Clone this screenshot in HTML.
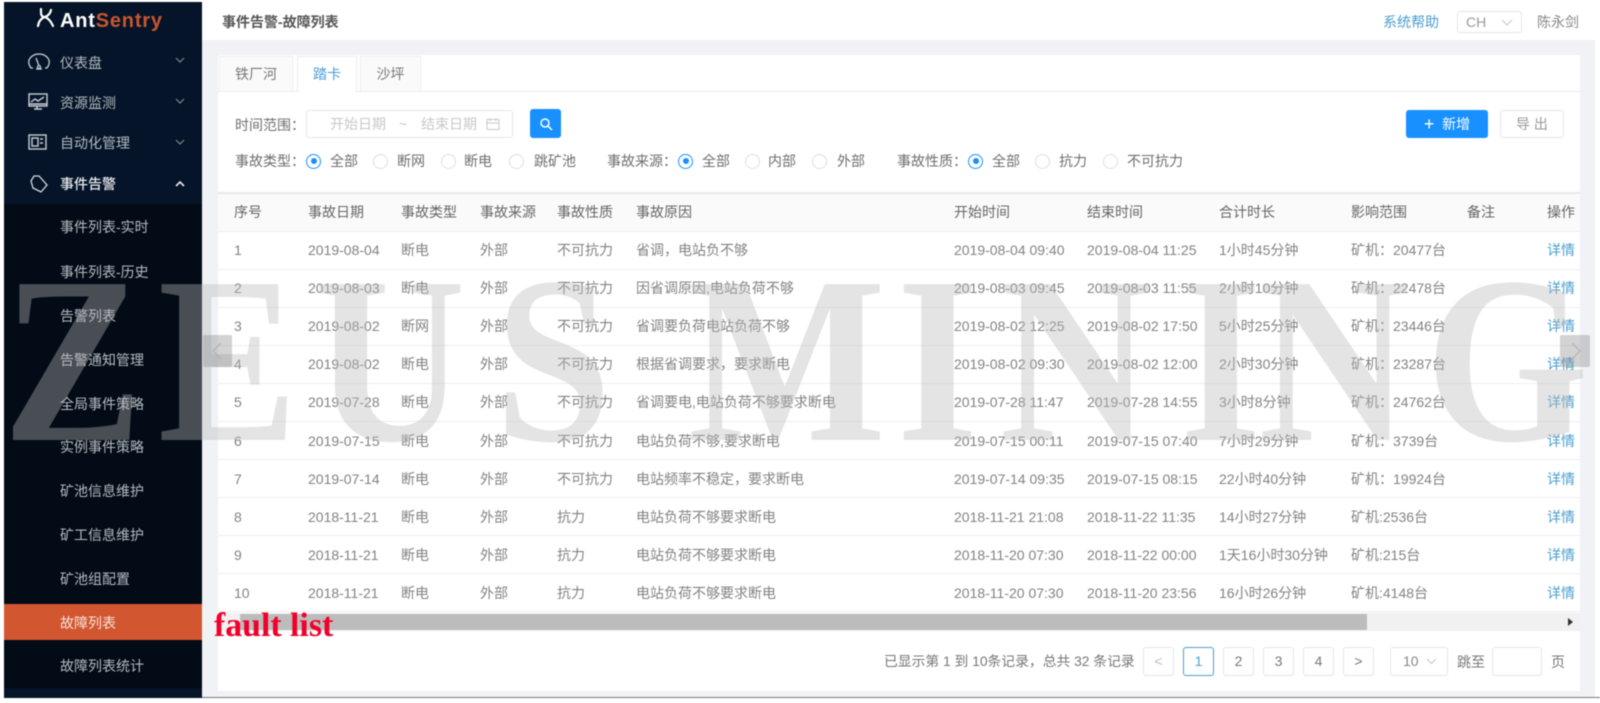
<!DOCTYPE html>
<html lang="zh"><head><meta charset="utf-8"><title>AntSentry</title>
<style>
*{box-sizing:border-box}
html,body{margin:0;padding:0;width:1600px;height:703px;overflow:hidden;background:#fff}
body{position:relative;font:14px "Liberation Sans","Noto Sans CJK SC",sans-serif;color:#808080}
.a{position:absolute;white-space:nowrap}
#blur{position:absolute;left:0;top:0;width:1600px;height:703px;filter:blur(.5px)}
.side{left:4px;top:2px;width:198px;height:696px;background:#051428}
.sub{left:4px;top:204px;width:198px;height:484px;background:#020b16}
.m{left:60px;color:#b4bac0;line-height:20px;transform:translateY(-10px)}
.box{background:#fff;border:1px solid #e4e6ea;border-radius:3px}
.lab{color:#6f6f6f;line-height:20px;top:151px}
.r{top:153.5px;width:15px;height:15px;border:1px solid #dcdfe3;border-radius:50%;background:#fff}
.r.on{border-color:#1890ff}
.r.on:after{content:"";position:absolute;left:3.5px;top:3.5px;width:6px;height:6px;border-radius:50%;background:#1890ff}
table{position:absolute;left:218px;top:192px;width:1362px;border-collapse:collapse;table-layout:fixed;border-top:2px solid #e8e8e8}
td,th{padding:0;font-weight:400;text-align:left;white-space:nowrap;border-bottom:1px solid #eeeeee;overflow:hidden}
th{height:38px;background:#fafafa;color:#666}
td{height:38.1px;color:#838383}
td:first-child,th:first-child{padding-left:16px}
td:last-child{color:#4a9fd0}
.pg{top:647px;height:29px;width:31px;line-height:27px;text-align:center;color:#777}
</style></head><body><div id="blur">
<div class="a" style="left:202px;top:0;width:1393px;height:698px;background:#f0f2f6"></div>
<div class="a" style="left:202px;top:0;width:1393px;height:40px;background:#fff"></div>
<div class="a" style="left:202px;top:697px;width:1398px;height:1px;background:#777"></div>
<div class="a side"></div><div class="a sub"></div>
<div class="a" style="left:4px;top:604px;width:198px;height:36px;background:#d2562f"></div>

<svg class="a" style="left:36px;top:7px" width="20" height="22" viewBox="0 0 20 22" fill="none" stroke="#fff" stroke-width="2.2" stroke-linecap="round"><path d="M5 2v4q0 4 4 4M15 3q-1 5-6 7M2 19q1-7 7-9 5 2 8 9"/></svg>
<div class="a" style="left:60px;top:8px;font-size:20px;font-weight:700;letter-spacing:.8px;color:#fff;line-height:26px">Ant<span style="color:#c8562f">Sentry</span></div>

<svg class="a" style="left:27px;top:52px" width="24" height="20" viewBox="0 0 24 20" fill="none" stroke="#c9ced3" stroke-width="1.3"><path d="M6 16H4Q1 12 2 8 5 2 12 2t10 6q1 4-2 8h-2"/><path d="m9 6 3 8"/><path d="M9 17h6"/><circle cx="12" cy="15" r="1.5"/></svg>
<svg class="a" style="left:28px;top:93px" width="20" height="18" viewBox="0 0 20 18" fill="none" stroke="#c9ced3" stroke-width="1.4"><rect x="1" y="1" width="18" height="12"/><path d="m3 9 4-3 3 2 6-4M6 16h8M9 13v3M1 11h18"/></svg>
<svg class="a" style="left:28px;top:134px" width="19" height="16" viewBox="0 0 19 16" fill="none" stroke="#c9ced3" stroke-width="1.4"><rect x="1" y="1" width="17" height="14"/><rect x="4" y="4" width="6" height="8"/><path d="M12 5h3M12 9h3"/></svg>
<svg class="a" style="left:29px;top:174px" width="20" height="20" viewBox="0 0 20 20" fill="none" stroke="#d5d9dd" stroke-width="1.3"><path d="M2 7 5 2h5l8 9-6 7-8-4Z"/></svg>

<div class="a m" style="top:63px">仪表盘</div>
<div class="a m" style="top:103px">资源监测</div>
<div class="a m" style="top:143px">自动化管理</div>
<div class="a m" style="top:184px;color:#e8eaec;font-weight:500">事件告警</div>
<svg class="a" style="left:175px;top:57px" width="10" height="6" viewBox="0 0 10 6" fill="none" stroke="#7f8790" stroke-width="1.2"><path d="m1 1 4 4 4-4"/></svg>
<svg class="a" style="left:175px;top:98px" width="10" height="6" viewBox="0 0 10 6" fill="none" stroke="#7f8790" stroke-width="1.2"><path d="m1 1 4 4 4-4"/></svg>
<svg class="a" style="left:175px;top:139px" width="10" height="6" viewBox="0 0 10 6" fill="none" stroke="#7f8790" stroke-width="1.2"><path d="m1 1 4 4 4-4"/></svg>
<svg class="a" style="left:175px;top:181px" width="10" height="6" viewBox="0 0 10 6" fill="none" stroke="#e8eaec" stroke-width="1.6"><path d="m1 5 4-4 4 4"/></svg>

<div class="a m" style="top:227px">事件列表-实时</div>
<div class="a m" style="top:272px">事件列表-历史</div>
<div class="a m" style="top:316px">告警列表</div>
<div class="a m" style="top:360px">告警通知管理</div>
<div class="a m" style="top:404px">全局事件策略</div>
<div class="a m" style="top:447px">实例事件策略</div>
<div class="a m" style="top:491px">矿池信息维护</div>
<div class="a m" style="top:535px">矿工信息维护</div>
<div class="a m" style="top:579px">矿池组配置</div>
<div class="a m" style="top:623px;color:#f6e4dc">故障列表</div>
<div class="a m" style="top:666px">故障列表统计</div>

<div class="a" style="left:222px;top:12px;font-weight:700;color:#555;line-height:20px">事件告警-故障列表</div>
<div class="a" style="left:1383px;top:12px;color:#4a9fd0;line-height:20px">系统帮助</div>
<div class="a box" style="left:1457px;top:11px;width:65px;height:22px;line-height:20px;padding-left:8px;color:#999">CH</div>
<svg class="a" style="left:1501px;top:19px" width="12" height="7" viewBox="0 0 12 7" fill="none" stroke="#c5c8cc"><path d="m1 1 5 5 5-5"/></svg>
<div class="a" style="left:1537px;top:12px;color:#888;line-height:20px">陈永剑</div>

<div class="a" style="left:218px;top:55px;width:1362px;height:636px;background:#fff"></div>
<div class="a" style="left:218px;top:91px;width:1362px;height:1px;background:#ececec"></div>
<div class="a" style="left:219px;top:56px;width:74px;height:36px;background:#fafafa;border:1px solid #ededed;text-align:center;line-height:34px;color:#777">铁厂河</div>
<div class="a" style="left:297px;top:56px;width:60px;height:36px;background:#fff;border:1px solid #ededed;border-bottom:0;text-align:center;line-height:34px;color:#4a9fd8">踏卡</div>
<div class="a" style="left:360px;top:56px;width:61px;height:36px;background:#fafafa;border:1px solid #ededed;text-align:center;line-height:34px;color:#777">沙坪</div>

<div class="a" style="left:235px;top:115px;color:#6f6f6f;line-height:20px">时间范围：</div>
<div class="a box" style="left:306px;top:110px;width:207px;height:28px"></div>
<div class="a" style="left:330px;top:114px;line-height:20px;color:#c8c8c8">开始日期</div>
<div class="a" style="left:399px;top:114px;line-height:20px;color:#c8c8c8">~</div>
<div class="a" style="left:421px;top:114px;line-height:20px;color:#c8c8c8">结束日期</div>
<svg class="a" style="left:486px;top:117px" width="14" height="14" viewBox="0 0 14 14" fill="none" stroke="#c8c8c8"><rect x="1" y="2.500" width="12" height="10"/><path d="M1 6h12M4 1v3M10 1v3"/></svg>
<div class="a" style="left:530px;top:109px;width:31px;height:29px;background:#1890ff;border-radius:3px"></div>
<svg class="a" style="left:539px;top:117px" width="14" height="14" viewBox="0 0 14 14" fill="none" stroke="#fff" stroke-width="1.5"><circle cx="6" cy="6" r="4"/><path d="m9 9 4 4"/></svg>
<div class="a" style="left:1406px;top:110px;width:82px;height:28px;background:#1890ff;border-radius:3px;color:#fff;line-height:28px;text-align:center"><span style="font-size:18px;vertical-align:-1px">+</span>&nbsp; 新增</div>
<div class="a box" style="left:1500px;top:110px;width:64px;height:28px;text-align:center;line-height:26px;color:#999">导 出</div>

<div class="a lab" style="left:235px">事故类型：</div>
<div class="a r on" style="left:306px"></div><div class="a lab" style="left:330px">全部</div>
<div class="a r" style="left:373px"></div><div class="a lab" style="left:397px">断网</div>
<div class="a r" style="left:441px"></div><div class="a lab" style="left:464px">断电</div>
<div class="a r" style="left:509px"></div><div class="a lab" style="left:534px">跳矿池</div>
<div class="a lab" style="left:607px">事故来源：</div>
<div class="a r on" style="left:678px"></div><div class="a lab" style="left:702px">全部</div>
<div class="a r" style="left:745px"></div><div class="a lab" style="left:768px">内部</div>
<div class="a r" style="left:812px"></div><div class="a lab" style="left:837px">外部</div>
<div class="a lab" style="left:897px">事故性质：</div>
<div class="a r on" style="left:968px"></div><div class="a lab" style="left:992px">全部</div>
<div class="a r" style="left:1035px"></div><div class="a lab" style="left:1059px">抗力</div>
<div class="a r" style="left:1103px"></div><div class="a lab" style="left:1127px">不可抗力</div>

<table><colgroup><col style="width:90px"><col style="width:93px"><col style="width:79px"><col style="width:77px"><col style="width:79px"><col style="width:318px"><col style="width:133px"><col style="width:132px"><col style="width:132px"><col style="width:116px"><col style="width:80px"><col style="width:33px"></colgroup>
<tr><th>序号</th><th>事故日期</th><th>事故类型</th><th>事故来源</th><th>事故性质</th><th>事故原因</th><th>开始时间</th><th>结束时间</th><th>合计时长</th><th>影响范围</th><th>备注</th><th>操作</th></tr>
<tr><td>1</td><td>2019-08-04</td><td>断电</td><td>外部</td><td>不可抗力</td><td>省调，电站负不够</td><td>2019-08-04 09:40</td><td>2019-08-04 11:25</td><td>1小时45分钟</td><td>矿机：20477台</td><td></td><td>详情</td></tr>
<tr><td>2</td><td>2019-08-03</td><td>断电</td><td>外部</td><td>不可抗力</td><td>因省调原因,电站负荷不够</td><td>2019-08-03 09:45</td><td>2019-08-03 11:55</td><td>2小时10分钟</td><td>矿机：22478台</td><td></td><td>详情</td></tr>
<tr><td>3</td><td>2019-08-02</td><td>断网</td><td>外部</td><td>不可抗力</td><td>省调要负荷电站负荷不够</td><td>2019-08-02 12:25</td><td>2019-08-02 17:50</td><td>5小时25分钟</td><td>矿机：23446台</td><td></td><td>详情</td></tr>
<tr><td>4</td><td>2019-08-02</td><td>断电</td><td>外部</td><td>不可抗力</td><td>根据省调要求，要求断电</td><td>2019-08-02 09:30</td><td>2019-08-02 12:00</td><td>2小时30分钟</td><td>矿机：23287台</td><td></td><td>详情</td></tr>
<tr><td>5</td><td>2019-07-28</td><td>断电</td><td>外部</td><td>不可抗力</td><td>省调要电,电站负荷不够要求断电</td><td>2019-07-28 11:47</td><td>2019-07-28 14:55</td><td>3小时8分钟</td><td>矿机：24762台</td><td></td><td>详情</td></tr>
<tr><td>6</td><td>2019-07-15</td><td>断电</td><td>外部</td><td>不可抗力</td><td>电站负荷不够,要求断电</td><td>2019-07-15 00:11</td><td>2019-07-15 07:40</td><td>7小时29分钟</td><td>矿机：3739台</td><td></td><td>详情</td></tr>
<tr><td>7</td><td>2019-07-14</td><td>断电</td><td>外部</td><td>不可抗力</td><td>电站频率不稳定，要求断电</td><td>2019-07-14 09:35</td><td>2019-07-15 08:15</td><td>22小时40分钟</td><td>矿机：19924台</td><td></td><td>详情</td></tr>
<tr><td>8</td><td>2018-11-21</td><td>断电</td><td>外部</td><td>抗力</td><td>电站负荷不够要求断电</td><td>2018-11-21 21:08</td><td>2018-11-22 11:35</td><td>14小时27分钟</td><td>矿机:2536台</td><td></td><td>详情</td></tr>
<tr><td>9</td><td>2018-11-21</td><td>断电</td><td>外部</td><td>抗力</td><td>电站负荷不够要求断电</td><td>2018-11-20 07:30</td><td>2018-11-22 00:00</td><td>1天16小时30分钟</td><td>矿机:215台</td><td></td><td>详情</td></tr>
<tr><td>10</td><td>2018-11-21</td><td>断电</td><td>外部</td><td>抗力</td><td>电站负荷不够要求断电</td><td>2018-11-20 07:30</td><td>2018-11-20 23:56</td><td>16小时26分钟</td><td>矿机:4148台</td><td></td><td>详情</td></tr>
</table>

<div class="a" style="left:218px;top:613px;width:1362px;height:18px;background:#f1f1f1"></div>
<div class="a" style="left:240px;top:614px;width:1127px;height:16px;background:#bcbcbc"></div>
<div class="a" style="left:1568px;top:618px;width:0;height:0;border-left:5px solid #333;border-top:4px solid transparent;border-bottom:4px solid transparent"></div>

<div class="a" style="left:884px;top:652px;line-height:20px;font-size:13.8px;color:#777">已显示第 1 到 10条记录，总共 32 条记录</div>
<div class="a box pg" style="left:1143px;color:#bbb">&lt;</div>
<div class="a box pg" style="left:1183px;border-color:#4a9fd0;color:#4a9fd0">1</div>
<div class="a box pg" style="left:1223px">2</div>
<div class="a box pg" style="left:1263px">3</div>
<div class="a box pg" style="left:1303px">4</div>
<div class="a box pg" style="left:1343px">&gt;</div>
<div class="a box pg" style="left:1390px;width:58px;text-align:left;padding-left:12px;color:#888">10</div>
<svg class="a" style="left:1426px;top:658px" width="11" height="7" viewBox="0 0 11 7" fill="none" stroke="#c5c8cc"><path d="m1 1 4.500 4.500 4.500-4.500"/></svg>
<div class="a" style="left:1457px;top:652px;line-height:20px;color:#777">跳至</div>
<div class="a box pg" style="left:1492px;width:50px"></div>
<div class="a" style="left:1551px;top:652px;line-height:20px;color:#777">页</div>

<svg class="a" style="left:0;top:0" width="1600" height="703"><text transform="scale(.88 1)" y="440" x="3.4 179.500 357 562.500 782 1019 1136 1341 1430 1620" font-family="Liberation Serif" font-weight="700" font-size="238" fill="#b9b9b9" fill-opacity=".39">ZEUSMINING</text></svg>

<div class="a" style="left:203px;top:335px;width:29px;height:32px;background:rgba(130,130,130,.35);border-radius:2px"></div>
<svg class="a" style="left:211px;top:342px" width="12" height="18" viewBox="0 0 12 18" fill="none" stroke="#b5b5b5" stroke-width="1.3"><path d="M10 1 2 9l8 8"/></svg>
<div class="a" style="left:1560px;top:335px;width:30px;height:32px;background:rgba(130,130,130,.35);border-radius:2px"></div>
<svg class="a" style="left:1570px;top:342px" width="12" height="18" viewBox="0 0 12 18" fill="none" stroke="#b5b5b5" stroke-width="1.3"><path d="m2 1 8 8-8 8"/></svg>

<div class="a" style="left:214px;top:606px;font:700 33.800px/40px 'Liberation Serif',serif;color:#f0002a">fault list</div>
</div></body></html>
